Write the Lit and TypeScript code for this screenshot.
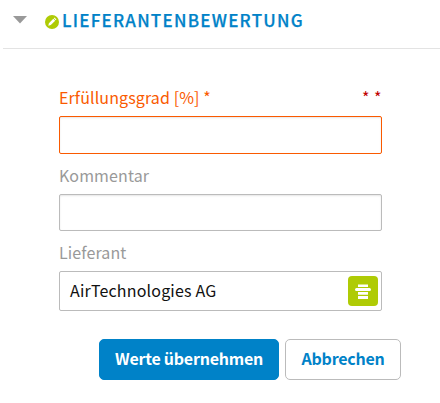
import { LitElement, html, css } from "lit";
import { customElement, property } from "lit/decorators.js";

@customElement("form-field")
class FormField extends LitElement {
  @property() label = "";
  @property() marks = "";
  @property() value = "";

  static styles = css`
    :host { display: block; color: #999; --edge: #bbb; }
    :host([invalid]) { color: #fa5a00; --edge: #fa5a00; }
    .head { display: flex; justify-content: space-between; height: 24px; line-height: 24px; font-size: 16px; letter-spacing: 0.12px; }
    .marks { color: #c00000; letter-spacing: 0.5px; }
    .box {
      box-sizing: border-box; display: flex; align-items: center; justify-content: space-between;
      height: var(--box-height, 38px); margin-top: var(--box-gap, 7px); padding: 0 3px 0 10px;
      border: 1px solid var(--edge); border-radius: 2px;
      box-shadow: inset 0 1px 2px rgba(0, 0, 0, 0.1); color: #111; font-size: 16px;
    }
    .value { height: 26px; line-height: 24px; letter-spacing: 0.18px; }
    :host([plain]) .box { box-shadow: none; }
  `;

  render() {
    return html`
      <div class="head"><span>${this.label}</span><span class="marks">${this.marks}</span></div>
      <div class="box"><span class="value">${this.value}</span><slot></slot></div>
    `;
  }
}

@customElement("app-root")
class AppRoot extends LitElement {
  static styles = css`
    :host {
      display: block; height: 403px; overflow: hidden; background: #fff;
      font-family: "Noto Sans CJK SC", "Noto Sans", sans-serif; white-space: nowrap;
    }
    .title {
      box-sizing: border-box; display: flex; height: 49px; margin-left: 3px; padding-left: 10px;
      border-bottom: 1px solid #e3e3e3; color: #0082c8;
    }
    .arrow { width: 14px; height: 8px; margin-top: 16px; }
    .edit { width: 14px; height: 14px; margin: 15px 3px 0 18px; }
    .title span { height: 40px; line-height: 40px; font-size: 17px; font-weight: 500; letter-spacing: 1.25px; -webkit-text-stroke: 0.25px #0082c8; }
    .form { display: flex; flex-direction: column; width: 323px; margin: 36px 0 0 59px; }
    .comment { margin-top: 9px; --box-height: 37px; }
    .supplier { margin-top: 9px; --box-height: 40px; --box-gap: 7px; }
    .pick { display: block; width: 30px; height: 30px; }
    .actions { display: flex; gap: 6px; margin: 28px 0 0 99px; }
    button {
      box-sizing: border-box; height: 41px; padding: 0 0 2px; border: 1px solid #bbb; border-radius: 5px;
      background: #fff; color: #0082c8; font: 700 16px/37px "Noto Sans CJK SC", "Noto Sans", sans-serif;
      letter-spacing: -0.24px;
    }
    .apply { width: 180px; border-color: #0082c8; background: #0082c8; color: #fff; }
    .cancel { width: 116px; }
  `;

  render() {
    return html`
      <div class="title">
        <svg class="arrow" viewBox="0 0 14 8"><path d="M0 0H14L7 7.5Z" fill="#999" /></svg>
        <svg class="edit" viewBox="0 0 14 14">
          <circle cx="7" cy="7" r="7" fill="#afcb05" />
          <path d="M3.3 10.7L3.9 8.2L8.3 3.8L10.2 5.7L5.8 10.1ZM8.8 3.3L9.5 2.6L11.4 4.5L10.7 5.2Z" fill="#fff" />
        </svg>
        <span>LIEFERANTENBEWERTUNG</span>
      </div>
      <div class="form">
        <form-field invalid label="Erfüllungsgrad [%] *" marks="* *"></form-field>
        <form-field class="comment" label="Kommentar"></form-field>
        <form-field class="supplier" plain label="Lieferant" value="AirTechnologies AG">
          <svg class="pick" viewBox="0 0 30 30">
            <rect width="30" height="30" rx="4" fill="#afcb05" />
            <path d="M10 8.4H20V11H10ZM10 16H20V18.8H10ZM10 20H20V23H10Z" fill="#fff" />
            <rect x="7" y="12" width="16" height="3" rx="1.5" fill="#fff" />
          </svg>
        </form-field>
      </div>
      <div class="actions">
        <button class="apply">Werte übernehmen</button>
        <button class="cancel">Abbrechen</button>
      </div>
    `;
  }
}
